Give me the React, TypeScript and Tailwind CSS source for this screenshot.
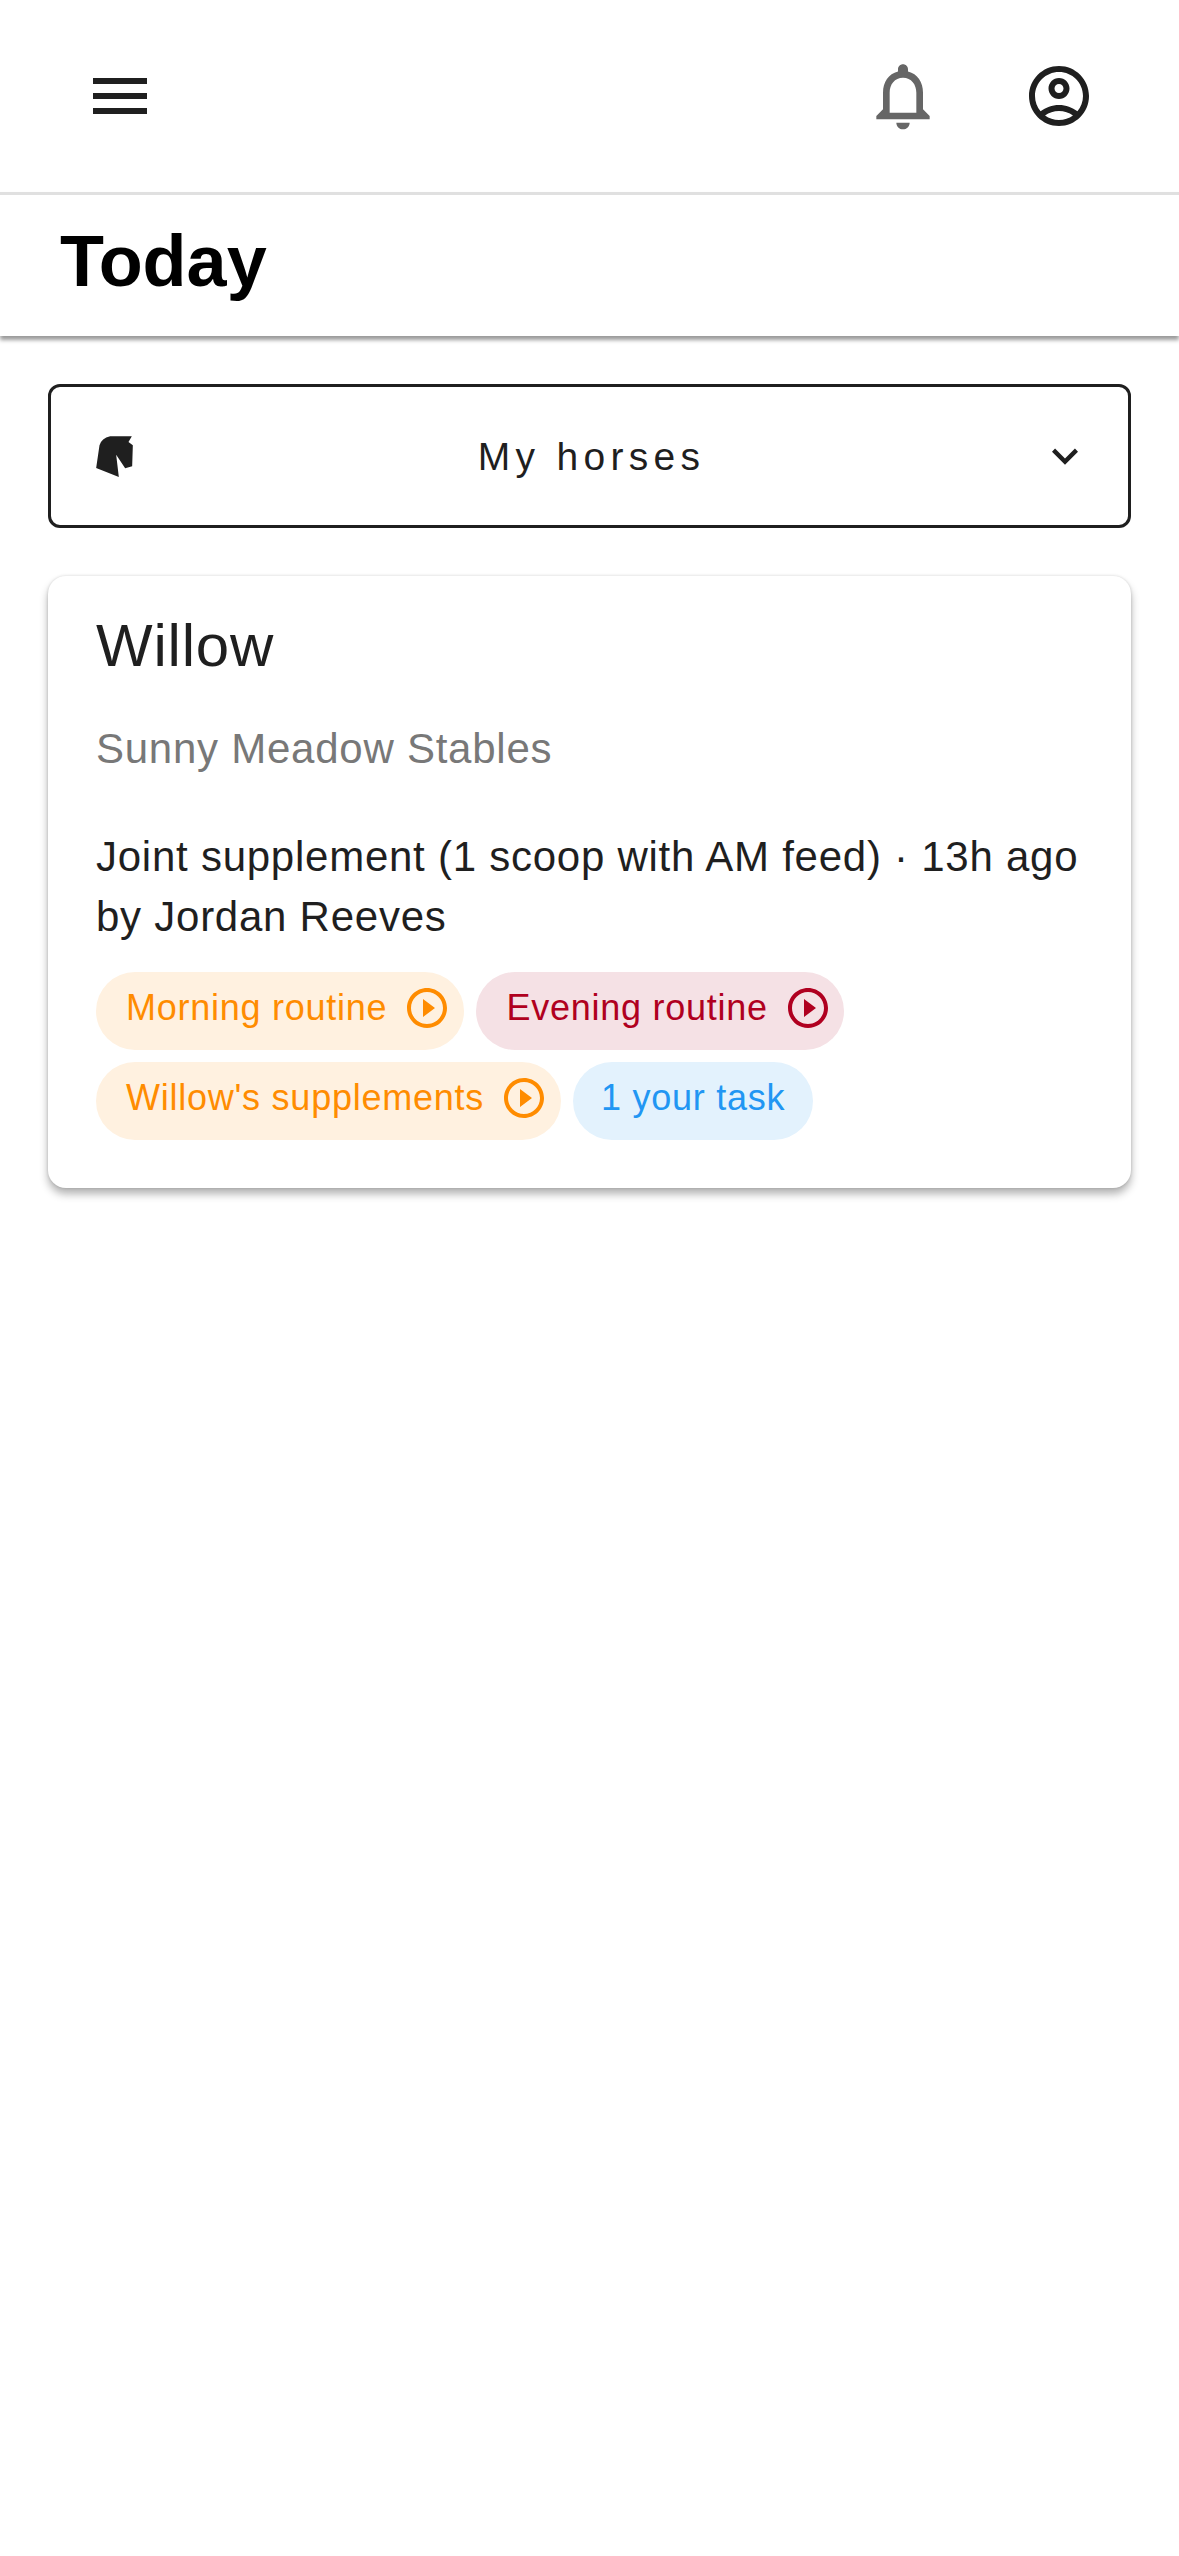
const FONT = "font-['Liberation_Sans',Arial,sans-serif]";

function PlayIcon({ className }: { className: string }) {
  return (
    <svg viewBox="0 0 24 24" className={`w-[48px] h-[48px] fill-current ${className}`}>
      <path d="M10 16.5l6-4.5-6-4.5v9zM12 2C6.48 2 2 6.48 2 12s4.48 10 10 10 10-4.48 10-10S17.52 2 12 2zm0 18c-4.41 0-8-3.59-8-8s3.59-8 8-8 8 3.59 8 8-3.59 8-8 8z" />
    </svg>
  );
}

function Chip({ label, bg, fg, play = true, tight = false }: { label: string; bg: string; fg: string; play?: boolean; tight?: boolean }) {
  return (
    <div className={`h-[78px] rounded-[39px] flex items-center pb-[6px] ${bg} ${fg} ${play ? (tight ? "pl-[30px] pr-[12px]" : "pl-[30px] pr-[13px]") : "px-[28px]"}`}>
      <span className="text-[36px] tracking-[0.75px] leading-none whitespace-nowrap">{label}</span>
      {play && <PlayIcon className="ml-[16px]" />}
    </div>
  );
}

export default function App() {
  return (
    <div className={`min-h-screen bg-white text-[#1f1f1f] ${FONT}`}>
      <header className="h-[192px] flex items-center justify-between pl-[84px] pr-[84px]">
        <svg viewBox="0 0 24 24" className="w-[72px] h-[72px] fill-[#1f1f1f]">
          <path d="M3 18h18v-2H3v2zm0-5h18v-2H3v2zm0-7v2h18V6H3z" />
        </svg>
        <div className="flex items-center gap-[80px]">
          <svg viewBox="0 0 24 24" className="w-[80px] h-[80px] fill-[#666666]">
            <path d="M12 22c1.1 0 2-.9 2-2h-4c0 1.1.9 2 2 2zm6-6v-5c0-3.07-1.63-5.64-4.5-6.32V4c0-.83-.67-1.5-1.5-1.5s-1.5.67-1.5 1.5v.68C7.64 5.36 6 7.92 6 11v5l-2 2v1h16v-1l-2-2zm-2 1H8v-6c0-2.48 1.51-4.5 4-4.5s4 2.02 4 4.5v6z" />
          </svg>
          <svg viewBox="0 0 24 24" className="w-[72px] h-[72px] fill-[#1f1f1f]">
            <path d="M12 2C6.48 2 2 6.48 2 12s4.48 10 10 10 10-4.48 10-10S17.52 2 12 2zM7.35 18.5C8.66 17.52 10.26 17 12 17s3.34.52 4.65 1.5C15.34 19.48 13.74 20 12 20s-3.34-.52-4.65-1.5zm10.79-1.38C16.45 15.83 14.34 15 12 15s-4.45.83-6.14 2.12C4.7 15.73 4 13.95 4 12c0-4.42 3.58-8 8-8s8 3.58 8 8c0 1.95-.7 3.73-1.86 5.12z" />
            <path d="M12 6c-1.93 0-3.5 1.57-3.5 3.5S10.07 13 12 13s3.5-1.57 3.5-3.5S13.93 6 12 6zm0 5c-.83 0-1.5-.67-1.5-1.5S11.17 8 12 8s1.5.67 1.5 1.5S12.83 11 12 11z" />
          </svg>
        </div>
      </header>
      <div className="h-[144px] border-t-[3px] border-[#e0e0e0] pl-[60px] pb-[10px] flex items-center shadow-[0_4px_4px_rgba(0,0,0,0.4)]">
        <h1 className="text-[72px] font-bold text-black leading-none">Today</h1>
      </div>
      <main className="px-[48px] pt-[48px] flex flex-col gap-[48px]">
        <div className="h-[144px] border-[3px] border-[#1f1f1f] rounded-[12px] flex items-center pl-[45px] pr-[37px]">
          <svg viewBox="198 197 110 123" className="w-[37px] h-[41px] fill-[#1f1f1f]">
            <path d="M198 293 L208 225 Q214 204 240 198 L305 198 L295 215 L308 225 L306 288 L285 294 L258 253 L266 320 Z" />
          </svg>
          <span className="flex-1 text-center text-[39px] tracking-[5.3px] leading-none ml-[11px]">My horses</span>
          <svg viewBox="0 0 24 24" className="w-[52px] h-[52px] fill-[#1f1f1f]">
            <path d="M16.59 8.59 12 13.17 7.41 8.59 6 10l6 6 6-6z" />
          </svg>
        </div>
        <section className="rounded-[18px] bg-white px-[48px] pb-[48px] shadow-[0_6px_9px_rgba(0,0,0,0.3),0_0_3px_rgba(0,0,0,0.15)]">
          <h2 className="text-[60px] leading-[72px] pt-[34px] h-[106px] tracking-[0.8px]">Willow</h2>
          <p className="text-[42px] leading-[60px] mt-[37px] text-[#787878] tracking-[0.75px]">Sunny Meadow Stables</p>
          <p className="text-[42px] leading-[60px] mt-[48px] tracking-[0.75px]">Joint supplement (1 scoop with AM feed) · 13h ago<br />by Jordan Reeves</p>
          <div className="flex flex-wrap gap-[12px] mt-[25px]">
            <Chip label="Morning routine" bg="bg-[#fff1e0]" fg="text-[#ff8c00]" />
            <Chip label="Evening routine" bg="bg-[#f5e1e5]" fg="text-[#b00020]" tight />
            <Chip label="Willow's supplements" bg="bg-[#fff1e0]" fg="text-[#ff8c00]" />
            <Chip label="1 your task" bg="bg-[#e3f2fd]" fg="text-[#2196f3]" play={false} />
          </div>
        </section>
      </main>
    </div>
  );
}
